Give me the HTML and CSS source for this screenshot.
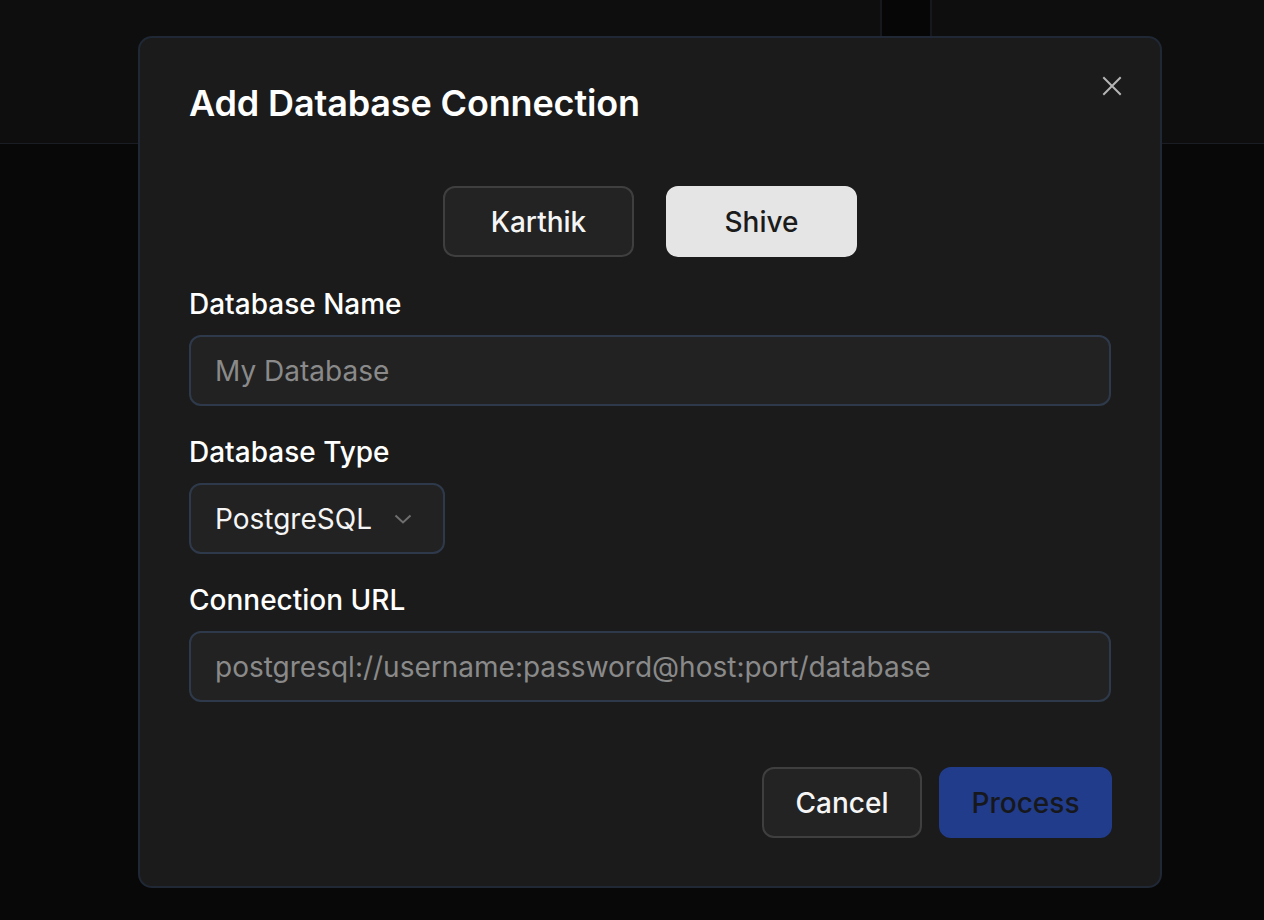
FILE: index.html
```html
<!DOCTYPE html>
<html lang="en">
<head>
<meta charset="utf-8">
<title>Add Database Connection</title>
<link rel="stylesheet" href="styles.css">
</head>
<body>
<div class="backdrop">
  <header class="topbar">
    <div class="topbar-left"></div>
    <div class="topbar-divider"></div>
    <div class="topbar-right"></div>
  </header>
</div>

<div class="modal" role="dialog" aria-labelledby="modal-title">
  <button class="close" aria-label="Close">
    <svg width="20" height="20" viewBox="0 0 20 20" fill="none" stroke="currentColor" stroke-width="2" stroke-linecap="square">
      <path d="M2 2L18 18M18 2L2 18"/>
    </svg>
  </button>
  <h2 id="modal-title" class="title">Add Database Connection</h2>

  <div class="tabs">
    <button class="tab">Karthik</button>
    <button class="tab tab-active">Shive</button>
  </div>

  <div class="field">
    <label class="label">Database Name</label>
    <div class="input"><span class="placeholder">My Database</span></div>
  </div>

  <div class="field">
    <label class="label">Database Type</label>
    <div class="select">
      <span>PostgreSQL</span>
      <svg class="chevron" width="18" height="10" viewBox="0 0 18 10" fill="none" stroke="currentColor" stroke-width="2">
        <path d="M1.5 1.5L9 8.5L16.5 1.5"/>
      </svg>
    </div>
  </div>

  <div class="field">
    <label class="label">Connection URL</label>
    <div class="input"><span class="placeholder">postgresql://username:password@host:port/database</span></div>
  </div>

  <div class="actions">
    <button class="btn btn-outline">Cancel</button>
    <button class="btn btn-primary">Process</button>
  </div>
</div>
</body>
</html>
```

FILE: styles.css
```css
* { box-sizing: border-box; }

html, body {
  margin: 0;
  height: 100%;
}

body {
  background: #080808;
  font-family: Inter, "Noto Sans", sans-serif;
  color: #f5f5f5;
  overflow: hidden;
}

.backdrop {
  height: 100%;
}

.topbar {
  height: 144px;
  display: flex;
  background: #0e0e0e;
  border-bottom: 1px solid #1a1e24;
}

.topbar-left { flex: 0 0 880px; }

.topbar-divider {
  flex: 0 0 52px;
  background: #060606;
  border-left: 2px solid #15181c;
  border-right: 2px solid #15181c;
}

.topbar-right { flex: 1; }

.modal {
  position: absolute;
  left: 138px;
  top: 36px;
  width: 1024px;
  height: 852px;
  background: #1b1b1b;
  border: 2px solid #1f2834;
  border-radius: 14px;
  padding: 43px 49px 48px;
  display: flex;
  flex-direction: column;
}

.close {
  position: absolute;
  top: 38px;
  right: 38px;
  width: 20px;
  height: 20px;
  padding: 0;
  border: 0;
  background: none;
  color: #b5b5b5;
  display: flex;
  align-items: center;
  justify-content: center;
}

.title {
  margin: 0;
  font-size: 36px;
  line-height: 44px;
  font-weight: 600;
  color: #ffffff;
  letter-spacing: -0.15px;
}

.tabs {
  display: flex;
  justify-content: center;
  gap: 32px;
  margin-top: 61px;
}

.tab {
  width: 191px;
  height: 71px;
  border-radius: 12px;
  border: 2px solid #3f3f3f;
  background: #232323;
  color: #f5f5f5;
  font-family: inherit;
  font-size: 28px;
  font-weight: 500;
}

.tab-active {
  background: #e5e5e5;
  border-color: #e5e5e5;
  color: #1b1b1b;
}

.field {
  display: flex;
  flex-direction: column;
  gap: 14px;
  margin-top: 29px;
}

.tabs + .field { margin-top: 30px; }

.label {
  font-size: 28px;
  line-height: 34px;
  font-weight: 500;
  color: #ffffff;
}

.input, .select {
  flex: 0 0 71px;
  height: 71px;
  border: 2px solid #2e3a4b;
  border-radius: 12px;
  background: #222222;
  display: flex;
  align-items: center;
  padding: 0 24px;
  font-size: 28px;
}

.placeholder { color: #8a8a8a; }

.select {
  align-self: flex-start;
  width: 256px;
  justify-content: space-between;
  color: #f5f5f5;
}

.chevron {
  color: #6f6f6f;
  margin-right: 7px;
}

.actions {
  margin-top: auto;
  display: flex;
  justify-content: flex-end;
  gap: 17px;
}

.btn {
  height: 71px;
  border-radius: 12px;
  font-family: inherit;
  font-size: 28px;
  font-weight: 500;
  padding: 0;
}

.btn-outline {
  width: 160px;
  background: #232323;
  border: 2px solid #3f3f3f;
  color: #f5f5f5;
}

.btn-primary {
  width: 173px;
  background: #213c8a;
  border: 2px solid #213c8a;
  color: #17181c;
  margin-right: -1px;
}
```
